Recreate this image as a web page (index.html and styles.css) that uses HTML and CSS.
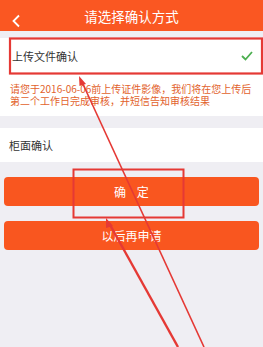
FILE: index.html
```html
<!DOCTYPE html>
<html lang="zh">
<head>
    <meta charset="UTF-8">
    <meta name="viewport" content="width=device-width, initial-scale=1.0">
    <title>请选择确认方式</title>
    <link rel="stylesheet" href="styles.css">
</head>
<body>
    <div class="header">
        <span class="back">
            <svg width="10" height="14" viewBox="0 0 10 14"><path d="M8 1.5 L2.5 7 L8 12.5" fill="none" stroke="#fff" stroke-width="1.8"/></svg>
        </span>
        <h1>请选择确认方式</h1>
    </div>

    <div class="card">
        <div class="row">
            <span>上传文件确认</span>
            <svg class="check" width="12" height="10" viewBox="0 0 12 10"><path d="M1 5 L4.5 8.5 L11 1" fill="none" stroke="#4caf50" stroke-width="1.8"/></svg>
        </div>
        <p class="notice">请您于2016-06-06前上传证件影像，我们将在您上传后<br>第二个工作日完成审核，并短信告知审核结果</p>
    </div>

    <div class="card card-single">
        <div class="row">
            <span>柜面确认</span>
        </div>
    </div>

    <div class="actions">
        <button class="btn">确&nbsp;&nbsp;&nbsp;&nbsp;定</button>
        <button class="btn">以后再申请</button>
    </div>

    <!-- 标注 -->
    <svg class="marks" width="263" height="347" viewBox="0 0 263 347">
        <rect x="10" y="38.5" width="252" height="35" fill="none" stroke="#e53935" stroke-width="2.2"/>
        <rect x="73.5" y="169.5" width="110" height="48" fill="none" stroke="#e53935" stroke-width="2"/>
        <line x1="82" y1="82" x2="204" y2="347" stroke="#e53935" stroke-width="1.6"/>
        <path d="M79 76 L86 84 L79.5 86 Z" fill="#e53935"/>
        <line x1="109" y1="223" x2="178" y2="347" stroke="#e53935" stroke-width="2.4"/>
        <path d="M106 218 L113 226 L106 228 Z" fill="#e53935"/>
    </svg>
</body>
</html>
```

FILE: styles.css
```css
body {
    margin: 0;
    width: 263px;
    height: 347px;
    overflow: hidden;
    position: relative;
    background-color: #efeef3;
    font-family: "Noto Sans CJK SC", "Noto Sans", sans-serif;
}
.header {
    height: 31px;
    background-color: #fa5722;
    display: flex;
    align-items: center;
    justify-content: center;
    position: relative;
    margin-bottom: 7px;
}
.header h1 {
    margin: 0;
    font-size: 13.5px;
    font-weight: normal;
    color: #fff;
}
.back {
    position: absolute;
    left: 11px;
    top: 9px;
}
.card {
    background-color: #fff;
    margin-bottom: 12px;
}
.row {
    height: 36px;
    display: flex;
    align-items: center;
    justify-content: space-between;
    padding: 0 10px 0 12px;
    font-size: 11px;
    color: #333;
}
.card-single .row {
    height: 34px;
    padding-left: 9px;
}
.notice {
    margin: 0;
    padding: 9px 0 9px 10px;
    font-size: 10px;
    line-height: 12px;
    white-space: nowrap;
    color: #e2622c;
}
.actions {
    display: flex;
    flex-direction: column;
    gap: 15px;
    padding: 3px 4px 0;
}
.btn {
    height: 29px;
    border: none;
    border-radius: 4px;
    background-color: #f9561f;
    color: #fff;
    font-family: inherit;
    font-size: 12px;
}
.marks {
    position: absolute;
    left: 0;
    top: 0;
    pointer-events: none;
}
```
